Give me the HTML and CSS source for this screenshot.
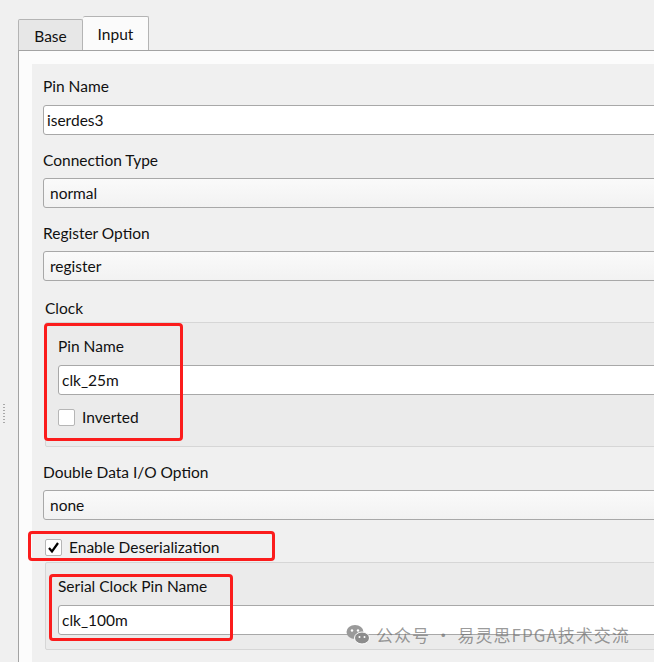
FILE: index.html
```html
<!DOCTYPE html>
<html lang="en">

<head>
    <link rel="stylesheet" href="styles.css">
</head>

<body>
    <div class="grip"></div>

    <div class="window">
        <div class="tabs">
            <div class="tab">Base</div>
            <div class="tab active">Input</div>
        </div>

        <div class="pane">
            <div class="form">
                <div class="label">Pin Name</div>
                <div class="text-input">iserdes3</div>

                <div class="label">Connection Type</div>
                <div class="combo">normal</div>

                <div class="label">Register Option</div>
                <div class="combo">register</div>

                <div class="label group-title">Clock</div>
                <div class="group">
                    <div class="label">Pin Name</div>
                    <div class="text-input">clk_25m</div>
                    <div class="check-row">
                        <span class="check"></span>
                        <span>Inverted</span>
                    </div>
                </div>

                <div class="label">Double Data I/O Option</div>
                <div class="combo">none</div>

                <div class="check-row enable-row">
                    <span class="check">
                        <svg width="13" height="13" viewBox="0 0 13 13">
                            <path d="M2 7 L5 10.5 L11 2" fill="none" stroke="#000" stroke-width="2.2" />
                        </svg>
                    </span>
                    <span>Enable Deserialization</span>
                </div>
                <div class="group group-serial">
                    <div class="label">Serial Clock Pin Name</div>
                    <div class="text-input">clk_100m</div>
                </div>
            </div>
        </div>
    </div>

    <!-- annotation boxes drawn over the screenshot -->
    <div class="mark mark-clock"></div>
    <div class="mark mark-enable"></div>
    <div class="mark mark-serial"></div>

    <div class="watermark">
        <svg width="24" height="22" viewBox="0 0 24 22">
            <ellipse cx="9" cy="8" rx="8.5" ry="7" fill="#9a9a9a" />
            <ellipse cx="16" cy="14" rx="7.5" ry="6" fill="#8c8c8c" stroke="#fff" stroke-width="1" />
            <circle cx="6" cy="6.5" r="1.2" fill="#fff" />
            <circle cx="12" cy="6.5" r="1.2" fill="#fff" />
            <circle cx="13.5" cy="13" r="1" fill="#fff" />
            <circle cx="18.5" cy="13" r="1" fill="#fff" />
        </svg>
        <span>公众号 · 易灵思FPGA技术交流</span>
    </div>
</body>

</html>
```

FILE: styles.css
```css
body {
    margin: 0;
    width: 654px;
    height: 662px;
    overflow: hidden;
    background-color: #f0f0f0;
    font-family: Lato, "Liberation Sans", sans-serif;
    font-size: 15.5px;
    color: #111;
    position: relative;
}

.window {
    padding: 16px 0 0 18px;
}

.tabs {
    display: flex;
    align-items: flex-end;
    height: 34px;
}

.tab {
    box-sizing: border-box;
    width: 65px;
    height: 31px;
    border: 1px solid #b4b4b4;
    border-bottom: none;
    border-radius: 2px 2px 0 0;
    background-color: #e7e7e7;
    display: flex;
    align-items: center;
    justify-content: center;
    padding-top: 2px;
}

.tab.active {
    width: 66px;
    height: 34px;
    border-left: none;
    background-color: #fbfbfb;
    padding-top: 0;
}

.pane {
    border-top: 1px solid #a3a3a3;
    border-left: 1px solid #a3a3a3;
    background-color: #fcfcfc;
    padding: 13px 0 0 13px;
    height: 620px;
}

.form {
    background-color: #f0f0f0;
    width: 622px;
    height: 620px;
    padding: 12px 0 0 11px;
    box-sizing: border-box;
    display: flex;
    flex-direction: column;
    align-items: flex-start;
    overflow: hidden;
}

.label {
    line-height: 20px;
    height: 20px;
}

.text-input,
.combo {
    box-sizing: border-box;
    width: 620px;
    height: 30px;
    margin-top: 9px;
    margin-bottom: 15px;
    border: 1px solid #a8a8a8;
    border-radius: 3px;
    background-color: #fff;
    line-height: 28px;
    padding-left: 3px;
}

.combo {
    padding-left: 6px;
    background: linear-gradient(#fafafa, #f2f2f2);
    margin-top: 8px;
}

.group-title {
    margin-top: 2px;
    margin-left: 2px;
}

.group {
    box-sizing: border-box;
    width: 620px;
    margin-top: 4px;
    margin-left: 2px;
    margin-bottom: 15px;
    padding: 13px 0 0 12px;
    background-color: #ebebeb;
    border: 1px solid #d6d6d6;
    border-radius: 2px;
    height: 125px;
}

.group .text-input {
    margin-bottom: 13px;
}

.check-row {
    display: flex;
    align-items: center;
    gap: 7px;
    height: 18px;
}

.check {
    box-sizing: border-box;
    width: 17px;
    height: 17px;
    border: 1px solid #b6b6b6;
    border-radius: 2px;
    background-color: #fff;
    display: flex;
    align-items: center;
    justify-content: center;
}

.enable-row {
    margin-top: 3px;
    margin-left: 2px;
}

.group-serial {
    margin-top: 6px;
    height: 88px;
}

.group-serial .text-input {
    margin-bottom: 0;
}

.mark {
    position: absolute;
    box-sizing: border-box;
    border: 3px solid #fb1c1c;
    border-radius: 4px;
}

.mark-clock {
    left: 44px;
    top: 323px;
    width: 139px;
    height: 118px;
}

.mark-enable {
    left: 28px;
    top: 531px;
    width: 247px;
    height: 30px;
}

.mark-serial {
    left: 49px;
    top: 574px;
    width: 184px;
    height: 67px;
}

.grip {
    position: absolute;
    left: 3px;
    top: 404px;
    width: 2px;
    height: 21px;
    background: repeating-linear-gradient(#a8a8a8 0 1px, transparent 1px 3px);
}

.watermark {
    position: absolute;
    left: 346px;
    top: 622px;
    display: flex;
    align-items: center;
    gap: 6px;
    font-family: "Noto Sans CJK SC", sans-serif;
    font-size: 17px;
    letter-spacing: 1px;
    color: rgba(110, 110, 110, 0.7);
}
```
